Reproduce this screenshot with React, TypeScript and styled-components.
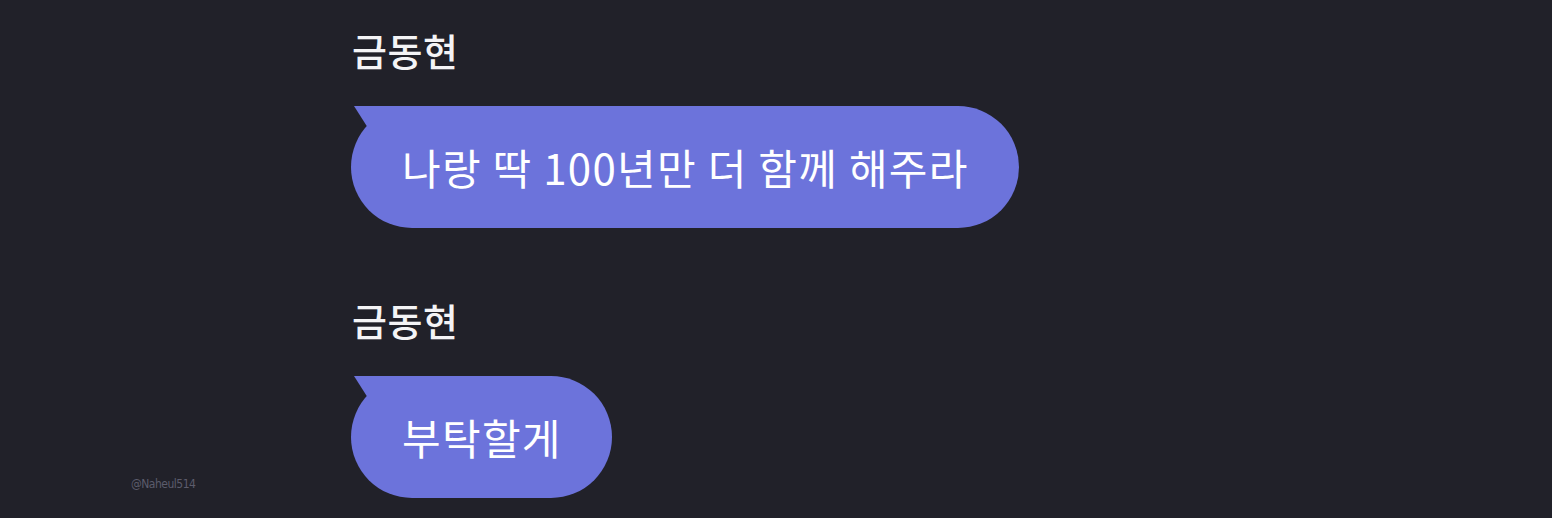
import React from "react";
import styled, { createGlobalStyle } from "styled-components";

const Global = createGlobalStyle`
  html, body { margin: 0; padding: 0; background: #212129; }
  body { width: 1552px; height: 518px; overflow: hidden; }
`;

const Page = styled.div`
  width: 1552px;
  height: 518px;
  background: #212129;
  display: flex;
  flex-direction: column;
  align-items: flex-start;
  padding: 26px 0 0 351px;
  box-sizing: border-box;
  font-family: "Noto Sans CJK KR", "Noto Sans", sans-serif;
  position: relative;
`;

const Name = styled.div`
  color: #f4f4f6;
  font-size: 38px;
  line-height: 48px;
  font-weight: 500;
  letter-spacing: 0.5px;
  margin-left: 1px;
`;

const Bubble = styled.div<{ $gap: number }>`
  position: relative;
  margin-top: ${(p) => p.$gap}px;
  height: 122px;
  padding: 0 50px 0 51px;
  box-sizing: border-box;
  border-radius: 61px;
  background: #6c73db;
  color: #ffffff;
  display: flex;
  align-items: center;
  font-size: 42px;
  font-weight: 400;
  letter-spacing: 1.3px;
  white-space: nowrap;
  &::before {
    content: "";
    position: absolute;
    left: 3px;
    top: 0;
    width: 70px;
    height: 22px;
    background: #6c73db;
    clip-path: polygon(0 0, 100% 0, 100% 100%, 20% 100%);
  }
`;

const BubbleText = styled.span`
  position: relative;
  top: -1px;
`;

const Spacer = styled.div`
  height: 68px;
`;

const Watermark = styled.div`
  position: absolute;
  left: 131px;
  top: 477px;
  font-family: "DejaVu Sans Condensed", "DejaVu Sans", sans-serif;
  font-size: 12px;
  color: #5c5c6c;
  letter-spacing: -0.5px;
`;

export default function App() {
  return (
    <>
      <Global />
      <Page>
        <Name>금동현</Name>
        <Bubble $gap={32}>
          <BubbleText>나랑 딱 100년만 더 함께 해주라</BubbleText>
        </Bubble>
        <Spacer />
        <Name>금동현</Name>
        <Bubble $gap={32}>
          <BubbleText>부탁할게</BubbleText>
        </Bubble>
        <Watermark>@Naheul514</Watermark>
      </Page>
    </>
  );
}
